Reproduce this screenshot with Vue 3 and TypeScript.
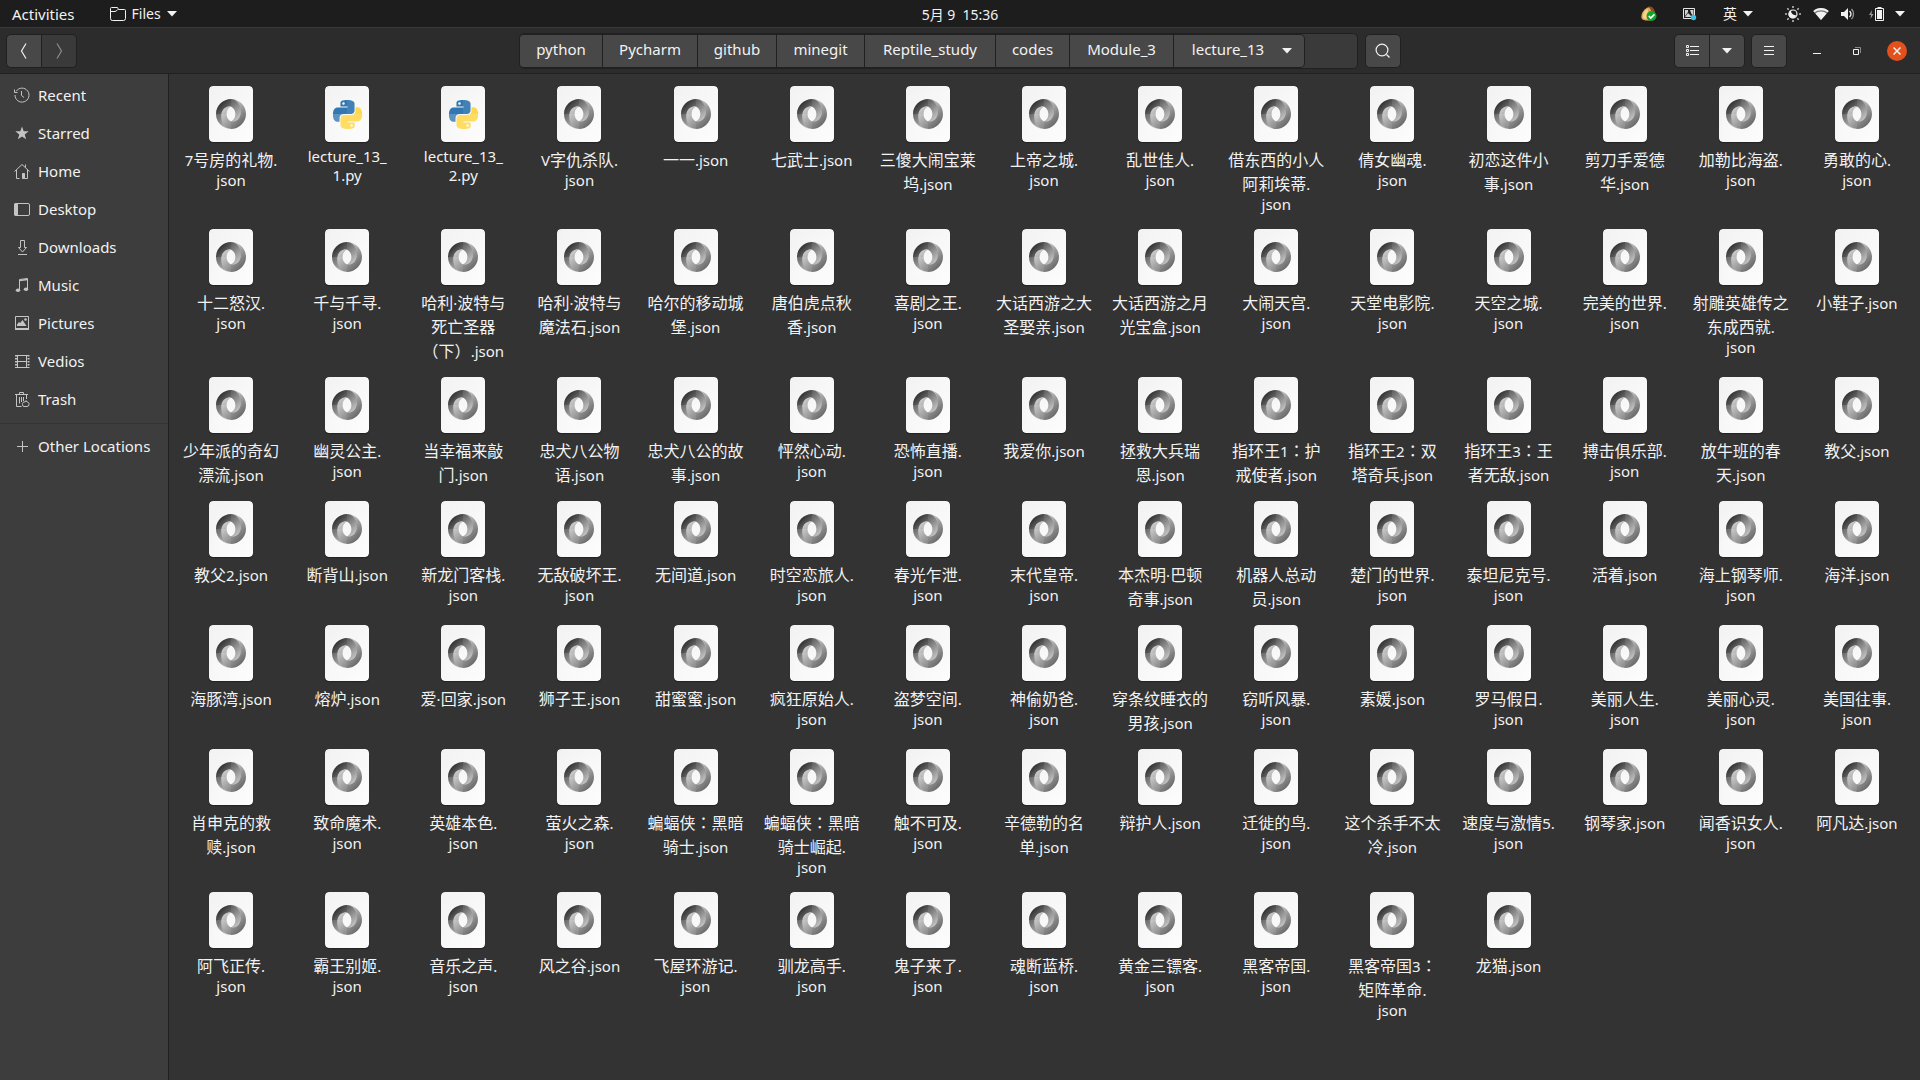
<script setup lang="ts">
interface Crumb {
  name: string
  width: number
}

interface Place {
  name: string
  icon: string
}

interface Piece {
  kind: 'latin' | 'colon' | 'han'
  text: string
}

interface Line {
  tall: boolean
  pieces: Piece[]
}

interface FileItem {
  name: string
  python: boolean
  lines: Line[]
}

const crumbs: Crumb[] = [
  { name: 'python', width: 83 },
  { name: 'Pycharm', width: 95 },
  { name: 'github', width: 79 },
  { name: 'minegit', width: 88 },
  { name: 'Reptile_study', width: 131 },
  { name: 'codes', width: 74 },
  { name: 'Module_3', width: 104 },
]

const places: Place[] = [
  { name: 'Recent', icon: 'recent' },
  { name: 'Starred', icon: 'starred' },
  { name: 'Home', icon: 'home' },
  { name: 'Desktop', icon: 'desktop' },
  { name: 'Downloads', icon: 'downloads' },
  { name: 'Music', icon: 'music' },
  { name: 'Pictures', icon: 'pictures' },
  { name: 'Vedios', icon: 'videos' },
  { name: 'Trash', icon: 'trash' },
]

// A "|" marks where the label wraps under its icon.
const names: string[] = [
  '7号房的礼物.|json', 'lecture_13_|1.py', 'lecture_13_|2.py', 'V字仇杀队.|json', '一一.json',
  '七武士.json', '三傻大闹宝莱|坞.json', '上帝之城.|json', '乱世佳人.|json', '借东西的小人|阿莉埃蒂.|json',
  '倩女幽魂.|json', '初恋这件小|事.json', '剪刀手爱德|华.json', '加勒比海盗.|json', '勇敢的心.|json',

  '十二怒汉.|json', '千与千寻.|json', '哈利·波特与|死亡圣器|（下）.json', '哈利·波特与|魔法石.json', '哈尔的移动城|堡.json',
  '唐伯虎点秋|香.json', '喜剧之王.|json', '大话西游之大|圣娶亲.json', '大话西游之月|光宝盒.json', '大闹天宫.|json',
  '天堂电影院.|json', '天空之城.|json', '完美的世界.|json', '射雕英雄传之|东成西就.|json', '小鞋子.json',

  '少年派的奇幻|漂流.json', '幽灵公主.|json', '当幸福来敲|门.json', '忠犬八公物|语.json', '忠犬八公的故|事.json',
  '怦然心动.|json', '恐怖直播.|json', '我爱你.json', '拯救大兵瑞|恩.json', '指环王1：护|戒使者.json',
  '指环王2：双|塔奇兵.json', '指环王3：王|者无敌.json', '搏击俱乐部.|json', '放牛班的春|天.json', '教父.json',

  '教父2.json', '断背山.json', '新龙门客栈.|json', '无敌破坏王.|json', '无间道.json',
  '时空恋旅人.|json', '春光乍泄.|json', '末代皇帝.|json', '本杰明·巴顿|奇事.json', '机器人总动|员.json',
  '楚门的世界.|json', '泰坦尼克号.|json', '活着.json', '海上钢琴师.|json', '海洋.json',

  '海豚湾.json', '熔炉.json', '爱·回家.json', '狮子王.json', '甜蜜蜜.json',
  '疯狂原始人.|json', '盗梦空间.|json', '神偷奶爸.|json', '穿条纹睡衣的|男孩.json', '窃听风暴.|json',
  '素媛.json', '罗马假日.|json', '美丽人生.|json', '美丽心灵.|json', '美国往事.|json',

  '肖申克的救|赎.json', '致命魔术.|json', '英雄本色.|json', '萤火之森.|json', '蝙蝠侠：黑暗|骑士.json',
  '蝙蝠侠：黑暗|骑士崛起.|json', '触不可及.|json', '辛德勒的名|单.json', '辩护人.json', '迁徙的鸟.|json',
  '这个杀手不太|冷.json', '速度与激情5.|json', '钢琴家.json', '闻香识女人.|json', '阿凡达.json',

  '阿飞正传.|json', '霸王别姬.|json', '音乐之声.|json', '风之谷.json', '飞屋环游记.|json',
  '驯龙高手.|json', '鬼子来了.|json', '魂断蓝桥.|json', '黄金三镖客.|json', '黑客帝国.|json',
  '黑客帝国3：|矩阵革命.|json', '龙猫.json',
]

const toLine = (text: string): Line => {
  const pieces = (text.match(/[\x20-\x7e·]+|：|[^\x20-\x7e·：]+/g) ?? []).map((part): Piece => ({
    kind: part === '：' ? 'colon' : /^[\x20-\x7e·]/.test(part) ? 'latin' : 'han',
    text: part,
  }))
  return { tall: pieces.some((piece) => piece.kind !== 'latin'), pieces }
}

const files: FileItem[] = names.map((name) => ({
  name,
  python: name.endsWith('.py'),
  lines: name.split('|').map(toLine),
}))
</script>

<template>
  <div class="screen">
    <svg class="defs" width="0" height="0" aria-hidden="true">
      <defs>
        <linearGradient id="paper" x1="0" y1="0" x2="1" y2="1">
          <stop offset="0" stop-color="#f2f2f2" />
          <stop offset="1" stop-color="#fdfdfd" />
        </linearGradient>
        <linearGradient id="ringDark" gradientUnits="userSpaceOnUse" x1="24" y1="24" x2="130" y2="130">
          <stop offset="0" stop-color="#333" />
          <stop offset="1" stop-color="#d8d8d8" />
        </linearGradient>
        <linearGradient id="ringLight" gradientUnits="userSpaceOnUse" x1="138" y1="138" x2="40" y2="40">
          <stop offset="0" stop-color="#5c5c5c" />
          <stop offset="1" stop-color="#d4d4d4" />
        </linearGradient>
        <symbol id="file-json" viewBox="0 0 44 56">
          <rect width="44" height="56" rx="4" fill="url(#paper)" />
          <g transform="translate(7 13) scale(0.1875)">
            <path fill="url(#ringDark)" d="M79.865 119.1c35.398 48.255 70.04-13.469 69.989-50.587C149.794 24.627 105.312.1 79.836.1 38.943.1 0 33.896 0 80.135 0 131.53 44.64 160 79.836 160c-7.965-1.147-34.507-6.834-34.863-67.967-.24-41.347 13.488-57.866 34.805-50.6.477.178 23.514 9.265 23.514 38.95 0 29.56-23.427 38.716-23.427 38.716z" />
            <path fill="url(#ringLight)" d="M79.823 41.4C56.433 33.34 27.78 52.617 27.78 91.23c0 63.048 46.72 68.77 52.384 68.77C121.057 160 160 126.204 160 79.965 160 28.568 115.36.1 80.164.1c9.748-1.35 52.541 10.55 52.541 69.037 0 38.141-31.953 58.905-52.735 50.033-.477-.178-23.514-9.264-23.514-38.95 0-29.56 23.367-38.818 23.367-38.818z" />
          </g>
          <path fill="#fff" fill-opacity="0.08" d="M22 4h18v24H22zM22 28h18v20H22z" />
          <path fill="#fff" fill-opacity="0.14" d="M4 28h18v20H4z" />
        </symbol>
        <symbol id="file-python" viewBox="0 0 44 56">
          <rect width="44" height="56" rx="4" fill="url(#paper)" />
          <g transform="translate(8 14) scale(1.2083)">
            <path fill="#3277b0" d="M14.25.18l.9.2.73.26.59.3.45.32.34.34.25.34.16.33.1.3.04.26.02.2-.01.13V8.5l-.05.63-.13.55-.21.46-.26.38-.3.31-.33.25-.35.19-.35.14-.33.1-.3.07-.26.04-.21.02H8.77l-.69.05-.59.14-.5.22-.41.27-.33.32-.27.35-.2.36-.15.37-.1.35-.07.32-.04.27-.02.21v3.06H3.17l-.21-.03-.28-.07-.32-.12-.35-.18-.36-.26-.36-.36-.35-.46-.32-.59-.28-.73-.21-.88-.14-1.05-.05-1.23.06-1.22.16-1.04.24-.87.32-.71.36-.57.4-.44.42-.33.42-.24.4-.16.36-.1.32-.05.24-.01h.16l.06.01h8.16v-.83H6.18l-.01-2.75-.02-.37.05-.34.11-.31.17-.28.25-.26.31-.23.38-.2.44-.18.51-.15.58-.12.64-.1.71-.06.77-.04.84-.02 1.27.05zm-6.3 1.98l-.23.33-.08.41.08.41.23.34.33.22.41.09.41-.09.33-.22.23-.34.08-.41-.08-.41-.23-.33-.33-.22-.41-.09-.41.09z" />
            <path fill="#ffd43b" d="M21.1 6.11l.28.06.32.12.35.18.36.27.36.35.35.47.32.59.28.73.21.88.14 1.04.05 1.23-.06 1.23-.16 1.04-.24.86-.32.71-.36.57-.4.45-.42.33-.42.24-.4.16-.36.09-.32.05-.24.02-.16-.01h-8.22v.82h5.84l.01 2.76.02.36-.05.34-.11.31-.17.29-.25.25-.31.24-.38.2-.44.17-.51.15-.58.13-.64.09-.71.07-.77.04-.84.01-1.27-.04-1.07-.14-.9-.2-.73-.25-.59-.3-.45-.33-.34-.34-.25-.34-.16-.33-.1-.3-.04-.25-.02-.2.01-.13v-5.34l.05-.64.13-.54.21-.46.26-.38.3-.32.33-.24.35-.2.35-.14.33-.1.3-.06.26-.04.21-.02.13-.01h5.84l.69-.05.59-.14.5-.21.41-.28.33-.32.27-.35.2-.36.15-.36.1-.35.07-.32.04-.28.02-.21V6.07h2.09l.14.01zm-6.47 14.25l-.23.33-.08.41.08.41.23.33.33.23.41.08.41-.08.33-.23.23-.33.08-.41-.08-.41-.23-.33-.33-.23-.41-.08-.41.08z" />
          </g>
          <path fill="#fff" fill-opacity="0.08" d="M22 4h18v24H22z" />
          <path fill="#fff" fill-opacity="0.2" d="M4 28h36v20H4z" />
        </symbol>
        <symbol id="caret" viewBox="0 0 10 6">
          <path fill="currentColor" d="M0 0h10L5 5.500z" />
        </symbol>
      </defs>
    </svg>

    <header class="topbar">
      <div class="topbar-left">
        <button class="bar-item" type="button">Activities</button>
        <button class="bar-item app-menu" type="button">
          <svg width="16" height="14" viewBox="0 0 16 14" fill="none" stroke="currentColor">
            <path d="M.5 11.500V1.500Q.5.5 1.500.5H7q1 0 1 1v0q0 1 1 1h5.500q1 0 1 1v8q0 2-2 2h-11q-2 0-2-2zM.5 4.500h4.500q1.500 0 2.500-2" />
          </svg>
          <span>Files</span>
          <svg width="10" height="6"><use href="#caret" /></svg>
        </button>
      </div>
      <button class="bar-item clock" type="button">5月 9&nbsp; 15:36</button>
      <div class="tray">
        <button class="bar-item" type="button" aria-label="Clipboard nut">
          <svg width="16" height="16" viewBox="0 0 16 16">
            <path fill="#e3aa55" d="M.5 12C-.5 7 4 2 8 1c3 0 5.500 3 5.500 7s-2 6.500-6 6.500S1 14 .5 12z" />
            <path fill="#f6d58e" d="M2 10c0-3 2-6 4.500-7 1 3 0 8-1.500 10-2 0-3-1-3-3z" />
            <path fill="#8a4b22" d="M7 1c3-1.500 6 .5 7 5l-3 1C10 4 9 2 7 1z" />
            <circle cx="10.500" cy="10" r="5" fill="#12a32a" />
            <path fill="none" stroke="#fff" stroke-width="1.700" d="M7.800 10l2 2 3.600-3.700" />
          </svg>
        </button>
        <button class="bar-item" type="button" aria-label="Screenshot tool">
          <svg width="14" height="14" viewBox="0 0 14 14">
            <path fill="none" stroke="#e8e8e8" d="M.5 1.500h11v10H.5z" />
            <path fill="#d0d0d0" d="M2 3h3v2L2 9zM7 3h3.500v6L8.500 7zM2 10l3-4 4 4z" />
            <circle cx="10.500" cy="10.500" r="2.700" fill="#38c6e8" />
          </svg>
        </button>
        <button class="bar-item input-source" type="button">
          <span>英</span>
          <svg width="10" height="6"><use href="#caret" /></svg>
        </button>
        <button class="bar-item system" type="button" aria-label="System">
          <svg width="16" height="16" viewBox="0 0 16 16" fill="none" stroke="currentColor">
            <circle cx="8" cy="8" r="4" stroke-width="1.200" />
            <path fill="currentColor" stroke="none" d="M6 4.600c0 3 2 5 5.400 4.600A4 4 0 1 1 6 4.600z" />
            <path stroke-width="1.600" stroke-opacity=".75" d="M8 0v2M8 14v2M0 8h2M14 8h2M2.300 2.300l1.400 1.400M12.300 12.300l1.400 1.400M2.300 13.700l1.400-1.400M12.300 3.700l1.400-1.400" />
          </svg>
          <svg width="16" height="12" viewBox="0 0 16 12">
            <path fill="#777" d="M8 0C5 0 2.300 1 .3 3L8 12l7.700-9C13.700 1 11 0 8 0z" />
            <path fill="currentColor" d="M8 0C5 0 2.300 1 .3 3l1.200 1.400C3.200 3 5.500 2.200 8 2.200s4.800.8 6.500 2.200L15.700 3C13.700 1 11 0 8 0zM8 3.400c-2.200 0-4.200.8-5.700 2L8 12l5.700-6.600c-1.500-1.200-3.500-2-5.700-2z" />
          </svg>
          <svg width="16" height="12" viewBox="0 0 16 12">
            <path fill="currentColor" d="M0 4h3l4-4v12L3 8H0z" />
            <path fill="none" stroke="currentColor" stroke-width="1.300" d="M8.500 3q3 3 0 6" />
            <path fill="none" stroke="#999" stroke-width="1.300" d="M10.500 1q2 2 2 5t-2 5" />
          </svg>
          <span class="power">
            <svg width="16" height="16" viewBox="0 0 16 16">
              <path fill="#999" d="M3 4L0 9h2l-.5 4L4.500 8h-2z" />
              <path fill="none" stroke="currentColor" d="M6.500 2.500h8v12h-8zM8.500 1.500h4" />
              <path fill="currentColor" d="M8 4h5v9H8z" />
            </svg>
            <svg width="10" height="6"><use href="#caret" /></svg>
          </span>
        </button>
      </div>
    </header>

    <div class="headerbar">
      <div class="linked">
        <button class="tool" type="button" aria-label="Back">
          <svg width="8" height="16" viewBox="0 0 8 16" fill="none" stroke="currentColor" stroke-width="1.200"><path d="M6 .5L1.500 8 6 15.500" /></svg>
        </button>
        <button class="tool off" type="button" aria-label="Forward">
          <svg width="8" height="16" viewBox="0 0 8 16" fill="none" stroke="currentColor" stroke-width="1.200"><path d="M2 .5L6.500 8 2 15.500" /></svg>
        </button>
      </div>

      <div class="location">
        <nav class="pathbar" aria-label="Path">
          <button v-for="crumb in crumbs" :key="crumb.name" class="crumb" type="button" :style="{ width: crumb.width + 'px' }">{{ crumb.name }}</button>
          <button class="crumb current" type="button">
            <span>lecture_13</span>
            <svg width="10" height="6"><use href="#caret" /></svg>
          </button>
        </nav>
        <button class="tool single" type="button" aria-label="Search">
          <svg width="16" height="16" viewBox="0 0 16 16" fill="none" stroke="currentColor" stroke-width="1.200"><circle cx="7" cy="7" r="5.900" /><path d="M11.500 11.500l3 3" /></svg>
        </button>
      </div>

      <div class="window-tools">
        <div class="linked">
          <button class="tool" type="button" aria-label="List view">
            <svg width="13" height="11" viewBox="0 0 13 11" fill="none" stroke="currentColor"><path d="M.5.5h2v2h-2zM.5 4.500h2v2h-2zM.5 8.500h2v2h-2zM4 1.500h9M4 5.500h9M4 9.500h9" /></svg>
          </button>
          <button class="tool" type="button" aria-label="View options">
            <svg width="10" height="6"><use href="#caret" /></svg>
          </button>
        </div>
        <button class="tool single" type="button" aria-label="Menu">
          <svg width="10" height="9" viewBox="0 0 10 9" stroke="currentColor"><path d="M0 .5h10M0 4.500h10M0 8.500h10" /></svg>
        </button>
        <div class="window-buttons">
          <button type="button" aria-label="Minimize">
            <svg width="8" height="8" viewBox="0 0 8 8" stroke="currentColor"><path d="M0 6.500h8" /></svg>
          </button>
          <button type="button" aria-label="Restore">
            <svg width="8" height="8" viewBox="0 0 8 8" fill="none"><path stroke="#888" d="M2 .5h5.500V6" /><path stroke="currentColor" d="M.5 2.500h5v5h-5z" /></svg>
          </button>
          <button class="close" type="button" aria-label="Close">
            <svg width="8" height="8" viewBox="0 0 8 8" stroke="currentColor" stroke-width="1.500"><path d="M.5.5l7 7M7.500.5l-7 7" /></svg>
          </button>
        </div>
      </div>
    </div>

    <div class="body">
      <aside class="sidebar">
        <nav class="places" aria-label="Places">
          <a v-for="place in places" :key="place.name" class="place" href="#">
            <svg width="16" height="16" viewBox="0 0 16 16" fill="none" stroke="currentColor">
              <g v-if="place.icon === 'recent'"><path d="M2.200 4.200A7 7 0 1 1 1 8M.5 2.500v3h3" /><path d="M7.500 4v4.500l2.500 2" /></g>
              <path v-else-if="place.icon === 'starred'" fill="currentColor" stroke="none" d="M8 1.500l1.700 4.700 5 .1-4 3.100 1.400 4.900L8 11.400l-4.100 2.900 1.400-4.900-4-3.100 5-.1z" />
              <g v-else-if="place.icon === 'home'"><path d="M.5 8.500L8 1.500l7.500 7M2.500 7v8.500h3M13.500 7v8.500h-3M11.500 1.500v3" /><path fill="currentColor" d="M8.500 10.500h2v5h-2z" /></g>
              <g v-else-if="place.icon === 'desktop'"><rect x=".5" y="2.500" width="15" height="12" rx="1.500" /><path fill="currentColor" stroke="none" d="M0 4q0-2 2-2h2v13H2q-2 0-2-2z" /></g>
              <path v-else-if="place.icon === 'downloads'" d="M6.500 1.500h4v7h2L8.500 13l-4-4.500h2zM4 15.500h9" />
              <g v-else-if="place.icon === 'music'"><path d="M5.500 13V2.500l8-1V12" /><path stroke-width="1.500" d="M5.500 3.500l8-1" /><g fill="currentColor" stroke="none"><ellipse cx="4" cy="13.200" rx="2.200" ry="1.800" /><ellipse cx="12" cy="12.200" rx="2.200" ry="1.800" /></g></g>
              <g v-else-if="place.icon === 'pictures'"><path d="M1.500 1.500h13v13h-13z" /><path fill="currentColor" stroke="none" d="M3 11V9.500l2-2.500 1.200 1L8.500 5l4 6zM1 13h14v2H1z" /><circle cx="11.500" cy="4.500" r="1.300" fill="currentColor" stroke="none" /></g>
              <g v-else-if="place.icon === 'videos'"><path d="M3.500 2.500h9v12h-9zM3.500 8.500h9" /><path stroke-width="2" stroke-dasharray="1.500 1.500" d="M2 2v13M14.500 2v13" /><path d="M1 2.500h14M1 14.500h14" /></g>
              <g v-else><path d="M1 3.500h13M5.500 3V1.500h4V3M2.500 4v11.500h5M12.500 4v4M5.500 6v6.500M7.500 6v5M9.500 6v4" /><path fill="#3d3d3d" d="M8.500 13.500a2 2 0 0 1 2.500-2.500l1-1.500 1 1.500a2 2 0 0 1 2 2.500q0 2-2 2h-3q-1.500 0-1.500-2z" /></g>
            </svg>
            <span>{{ place.name }}</span>
          </a>
        </nav>
        <a class="place other" href="#">
          <svg width="16" height="16" viewBox="0 0 16 16" stroke="currentColor"><path d="M3 8.500h11M8.500 3v11" /></svg>
          <span>Other Locations</span>
        </a>
      </aside>

      <main class="files">
        <figure v-for="file in files" :key="file.name" class="file">
          <svg class="sheet" width="44" height="56"><use :href="file.python ? '#file-python' : '#file-json'" /></svg>
          <figcaption class="label">
            <span v-for="(line, i) in file.lines" :key="i" class="line" :class="{ tall: line.tall }"><span v-for="(piece, j) in line.pieces" :key="j" :class="piece.kind">{{ piece.text }}</span></span>
          </figcaption>
        </figure>
      </main>
    </div>
  </div>
</template>

<style>
body {
  margin: 0;
  background: #333;
}
</style>

<style scoped>
.screen {
  display: flex;
  flex-direction: column;
  min-height: 100vh;
  background: #333;
  color: #f2f2f2;
  font: 15px/20px "Noto Sans", "Noto Sans CJK SC", sans-serif;
}

.defs {
  position: absolute;
}

svg {
  display: block;
  flex: none;
}

button {
  display: flex;
  align-items: center;
  justify-content: center;
  box-sizing: border-box;
  margin: 0;
  padding: 0;
  border: 0;
  background: none;
  color: inherit;
  font: inherit;
}

.topbar {
  display: grid;
  grid-template-columns: 1fr auto 1fr;
  align-items: center;
  height: 27px;
  padding: 0 12px;
  background: #1d1d1d;
}

.topbar-left {
  display: flex;
  gap: 35px;
}

.bar-item {
  font-size: 14px;
}

.topbar-left .bar-item:first-child {
  font-size: 15px;
}

.app-menu {
  gap: 6px;
}

.clock {
  margin-top: 2px;
}

.tray {
  display: flex;
  justify-content: flex-end;
  align-items: center;
  gap: 26px;
  padding-right: 3px;
}

.input-source {
  gap: 6px;
}

.system {
  gap: 12px;
  margin-left: 6px;
}

.power {
  display: flex;
  align-items: center;
  gap: 10px;
}

.headerbar {
  display: grid;
  grid-template-columns: 1fr auto 1fr;
  align-items: center;
  box-sizing: border-box;
  height: 47px;
  padding: 0 6px;
  border-top: 1px solid #3a3a3a;
  border-bottom: 1px solid #202020;
  background: #2c2c2c;
}

.linked {
  display: flex;
}

.tool {
  width: 36px;
  height: 34px;
  border: 1px solid #202020;
  background: #484848;
}

.single {
  border-radius: 5px;
}

.linked .tool:first-child {
  border-radius: 5px 0 0 5px;
}

.linked .tool:last-child {
  width: 35px;
  border-left: 0;
  border-radius: 0 5px 5px 0;
}

.off,
.linked .off:last-child {
  background: #3a3a3a;
  color: #8c8c8c;
}

.location {
  display: flex;
  align-items: center;
  gap: 7px;
}

.pathbar {
  display: flex;
  box-sizing: border-box;
  height: 36px;
  padding-right: 52px;
  border: 1px solid #202020;
  border-radius: 5px;
  background: #3a3a3a;
}

.crumb {
  padding-bottom: 3px;
  border: solid #202020;
  border-width: 1px 1px 1px 0;
  background: #484848;
}

.crumb:first-child {
  border-radius: 4px 0 0 4px;
}

.current {
  gap: 18px;
  width: 131px;
  padding-left: 6px;
  border-radius: 0 5px 5px 0;
}

.current svg {
  margin-top: 3px;
}

.window-tools {
  display: flex;
  justify-content: flex-end;
  align-items: center;
  gap: 6px;
}

.window-buttons {
  display: flex;
  align-items: center;
  gap: 20px;
  margin: 0 7px 0 14px;
}

.window-buttons button {
  width: 20px;
  height: 20px;
}

.window-buttons .close {
  border-radius: 50%;
  background: #e2501c;
}

.body {
  display: flex;
  flex: 1;
}

.sidebar {
  flex: none;
  box-sizing: border-box;
  width: 169px;
  padding-top: 2px;
  border-right: 1px solid #202020;
  background: #3d3d3d;
}

.places {
  padding-bottom: 5px;
  border-bottom: 1px solid #343434;
}

.place {
  display: flex;
  align-items: center;
  gap: 8px;
  height: 38px;
  padding-left: 14px;
  color: #f2f2f2;
  text-decoration: none;
}

.place svg {
  color: #c4c4c4;
}

.place span {
  padding-bottom: 1px;
}

.other {
  margin-top: 3px;
}

.files {
  display: grid;
  flex: 1;
  grid-template-columns: repeat(auto-fill, minmax(116px, 1fr));
  align-content: start;
  row-gap: 15px;
  padding: 12px 5px 12px 4px;
}

.file {
  display: flex;
  flex-direction: column;
  align-items: center;
  gap: 5px;
  margin: 0;
}

.sheet {
  border-radius: 4px;
  box-shadow: 0 1px 1px #222;
}

.label {
  text-align: center;
  white-space: nowrap;
}

.line {
  display: block;
  height: 19px;
  line-height: 19px;
}

.tall {
  height: 24px;
  font: 16px/24px "Noto Sans CJK SC", sans-serif;
}

.tall .latin {
  font: 15px/16px "Noto Sans", sans-serif;
}

.colon {
  font: 16px/16px "Noto Sans CJK TC", sans-serif;
}
</style>
